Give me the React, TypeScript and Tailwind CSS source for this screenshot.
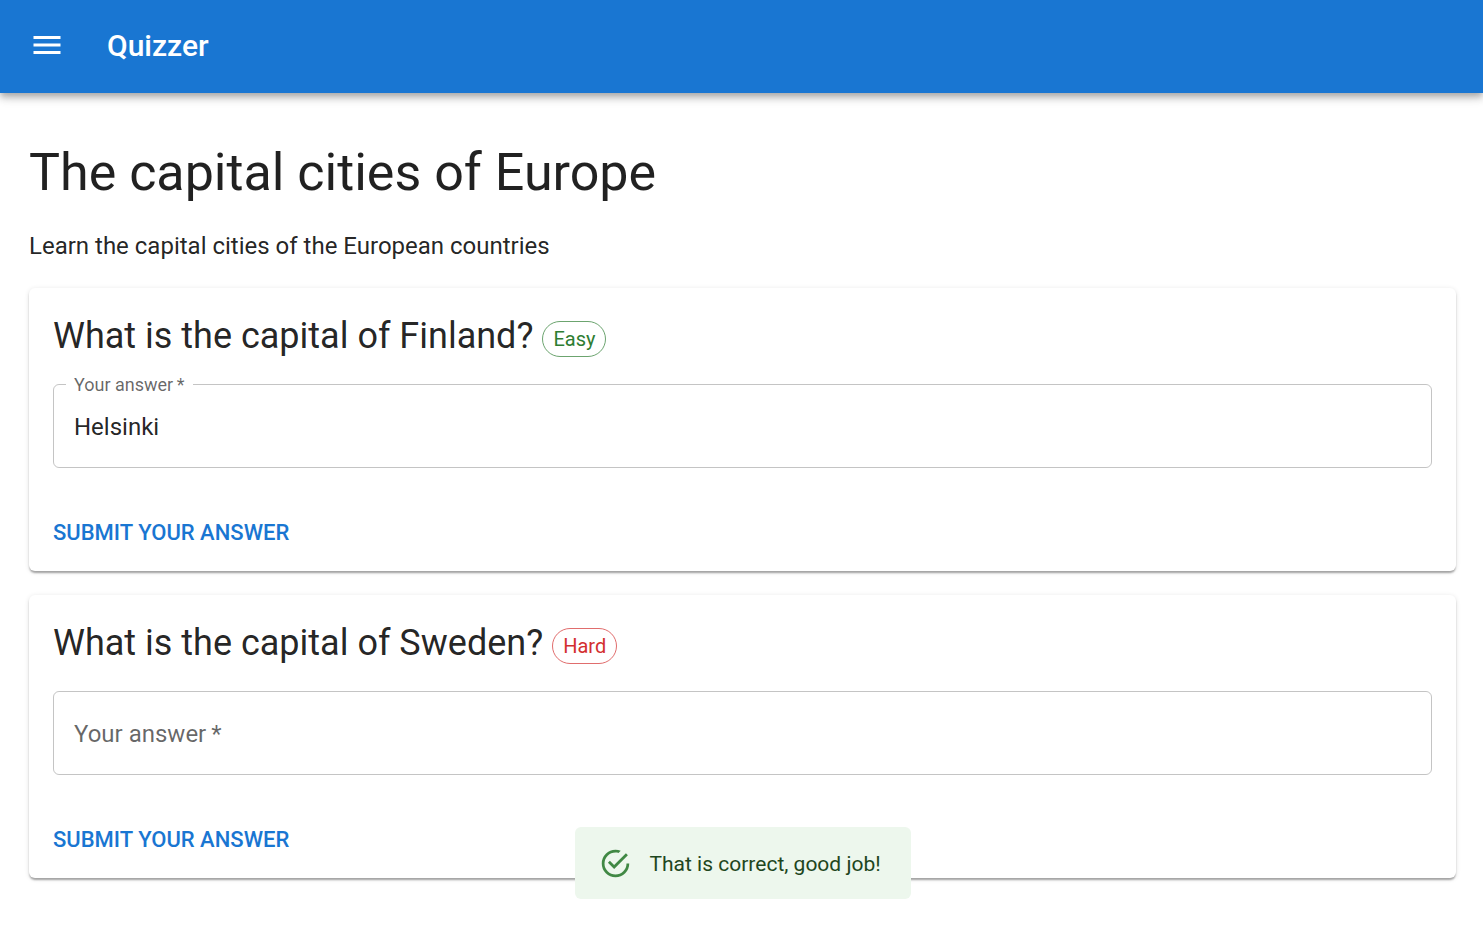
import { useId, useState } from "react";
import { MdMenu } from "react-icons/md";

type Difficulty = "Easy" | "Hard";

const chipColors: Record<Difficulty, string> = {
  Easy: "border-[#2e7d32]/70 text-[#2e7d32]",
  Hard: "border-[#d32f2f]/70 text-[#d32f2f]",
};

interface QuestionProps {
  title: string;
  difficulty: Difficulty;
  initialAnswer?: string;
}

function QuestionCard({ title, difficulty, initialAnswer = "" }: QuestionProps) {
  const id = useId();
  const [answer, setAnswer] = useState(initialAnswer);
  const [focused, setFocused] = useState(false);
  const floating = focused || answer !== "";

  return (
    <form
      onSubmit={(event) => event.preventDefault()}
      className="rounded-md bg-white px-6 pt-6 pb-4 shadow-[0_3px_2px_-1px_rgba(0,0,0,0.2),0_2px_2px_0_rgba(0,0,0,0.14),0_1px_5px_0_rgba(0,0,0,0.12)]"
    >
      <div className="flex items-center gap-[9px]">
        <h2 className="text-[36px] leading-12">{title}</h2>
        <span className={`mt-1.5 flex h-9 items-center rounded-full border px-2.5 text-[20px] ${chipColors[difficulty]}`}>
          {difficulty}
        </span>
      </div>
      <div className="relative mt-6 h-[84px] rounded-md border border-black/23">
        <label
          htmlFor={id}
          className={
            floating
              ? "absolute -top-3 left-3 bg-white px-2 text-[18px] leading-6 text-black/60"
              : "pointer-events-none absolute inset-y-0 left-5 flex items-center pt-0.5 text-[24px] text-black/60"
          }
        >
          Your answer&thinsp;*
        </label>
        <input
          id={id}
          required
          value={answer}
          onChange={(event) => setAnswer(event.target.value)}
          onFocus={() => setFocused(true)}
          onBlur={() => setFocused(false)}
          className="h-full w-full bg-transparent px-5 pt-0.5 text-[24px] outline-none"
        />
      </div>
      <button type="submit" className="mt-[41px] block h-[46px] text-[22px] font-medium text-[#1976d2] uppercase">
        Submit your answer
      </button>
    </form>
  );
}

export default function App() {
  return (
    <div className="min-h-screen bg-white font-[Roboto,sans-serif] text-black/87">
      <header className="flex h-[93px] items-center gap-[42px] bg-[#1976d2] px-[29px] text-white shadow-[0_3px_6px_-1px_rgba(0,0,0,0.2),0_6px_7px_0_rgba(0,0,0,0.14),0_1px_15px_0_rgba(0,0,0,0.12)]">
        <button aria-label="Open menu" className="pb-1">
          <MdMenu className="size-9" />
        </button>
        <span className="pb-0.5 text-[30px] font-medium">Quizzer</span>
      </header>
      <main className="pt-[45px] pr-[27px] pl-[29px]">
        <h1 className="text-[52px] leading-[70px]">The capital cities of Europe</h1>
        <p className="mt-5 text-[24px] leading-9">Learn the capital cities of the European countries</p>
        <div className="mt-6 flex flex-col gap-6">
          <QuestionCard title="What is the capital of Finland?" difficulty="Easy" initialAnswer="Helsinki" />
          <QuestionCard title="What is the capital of Sweden?" difficulty="Hard" />
        </div>
      </main>
      <div className="pointer-events-none fixed inset-x-0 bottom-[26px] flex justify-center pl-0.5">
        <div
          role="alert"
          className="pointer-events-auto flex h-[72px] min-w-[336px] items-center gap-[18px] rounded-md bg-[#edf7ed] px-6 text-[21px] text-[#1e4620]"
        >
          <svg viewBox="0 0 24 24" className="size-[33px] text-[#2e7d32] opacity-90" fill="currentColor" aria-hidden="true">
            <path d="M20,12A8,8 0 0,1 12,20A8,8 0 0,1 4,12A8,8 0 0,1 12,4C12.76,4 13.5,4.11 14.2,4.31L15.77,2.74C14.61,2.26 13.34,2 12,2A10,10 0 0,0 2,12A10,10 0 0,0 12,22A10,10 0 0,0 22,12M7.91,10.08L6.5,11.5L11,16L21,6L19.59,4.58L11,13.17L7.91,10.08Z" />
          </svg>
          <span className="pt-1">That is correct, good job!</span>
        </div>
      </div>
    </div>
  );
}
